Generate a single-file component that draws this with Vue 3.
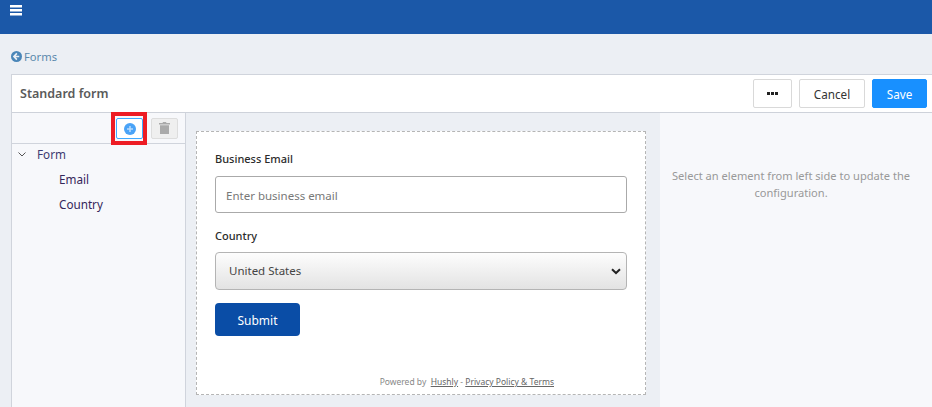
<script setup>
const items = ['Email', 'Country']
</script>

<template>
  <div class="page">
    <header class="topbar">
      <svg class="burger" width="12" height="11" viewBox="0 0 12 11"><path d="M0 0h12v2.4H0zM0 4h12v2.4H0zM0 8h12v2.4H0z" fill="#fff"/></svg>
    </header>
    <nav class="crumb">
      <svg width="11" height="11" viewBox="0 0 12 12"><circle cx="6" cy="6" r="6" fill="#4a86b8"/><path d="M6.4 2.6 3.2 6l3.2 3.4M3.6 6h5.4" stroke="#eceff4" stroke-width="1.8" fill="none"/></svg>
      <span>Forms</span>
    </nav>
    <main class="card">
      <div class="head">
        <h1>Standard form</h1>
        <div class="actions">
          <button class="btn more">
            <svg width="11" height="3" viewBox="0 0 11 3"><path d="M0 0h3v3H0zM4 0h3v3H4zM8 0h3v3H8z" fill="#222"/></svg>
          </button>
          <button class="btn cancel">Cancel</button>
          <button class="btn save">Save</button>
        </div>
      </div>
      <div class="body">
        <aside class="tree">
          <div class="tools">
            <span class="hilite">
              <button class="tool add">
                <svg width="12" height="12" viewBox="0 0 12 12"><circle cx="6" cy="6" r="6" fill="#4aa3f7"/><path d="M6 3v6M3 6h6" stroke="#bcdcfb" stroke-width="1.5"/></svg>
              </button>
            </span>
            <button class="tool del">
              <svg width="11" height="12" viewBox="0 0 11 12"><path d="M4 0h3l.5 1H11v1.5H0V1h3.5zM1 3.3h9V12H1z" fill="#aaa"/></svg>
            </button>
          </div>
          <div class="nodes">
            <div class="root">
              <svg width="8" height="5" viewBox="0 0 8 5"><path d="M.5.5 4 4 7.5.5" stroke="#555" fill="none"/></svg>
              <span>Form</span>
            </div>
            <div v-for="i in items" :key="i" class="leaf">{{ i }}</div>
          </div>
        </aside>
        <section class="canvas">
          <div class="form">
            <label class="lab">Business Email</label>
            <div class="input">Enter business email</div>
            <label class="lab second">Country</label>
            <div class="select">
              <span>United States</span>
              <svg width="10" height="7" viewBox="0 0 10 7"><path d="M1 1.2 5 5l4-3.8" stroke="#222" stroke-width="2" fill="none"/></svg>
            </div>
            <button class="submit">Submit</button>
            <p class="foot">Powered by &nbsp;<u>Hushly</u> - <u>Privacy Policy &amp; Terms</u></p>
          </div>
        </section>
        <aside class="config">
          <p>Select an element from left side to update the configuration.</p>
        </aside>
      </div>
    </main>
  </div>
</template>

<style>
html, body { margin: 0; background: #eceff4; overflow: hidden; }
</style>

<style scoped>
.page { width: 932px; height: 407px; overflow: hidden; background: #eceff4; font-family: "Noto Sans", "Open Sans", sans-serif; }
.topbar { height: 34px; background: #1b58a8; box-sizing: border-box; padding: 5px 0 0 10px; }
.burger { display: block; }
.crumb { height: 40px; box-sizing: border-box; padding: 15px 0 0 11px; display: flex; align-items: flex-start; gap: 2px; font-size: 11.2px; line-height: 16px; color: #5b89ad; }
.crumb svg { margin-top: 2px; }
.card { margin-left: 11px; border: 1px solid #d0d4dc; border-right: 0; border-bottom: 0; height: 333px; box-sizing: border-box; }
.head { height: 38px; box-sizing: border-box; background: #fff; display: flex; align-items: center; justify-content: space-between; padding: 0 5px 0 8px; border-bottom: 1px solid #ced2da; }
h1 { margin: 0; font-size: 12.5px; font-weight: 600; color: #5a5a5a; }
.actions { display: flex; gap: 7px; }
.btn { height: 29px; border-radius: 2px; font: 11.7px "Noto Sans", sans-serif; padding: 0; border: 1px solid #d9d9d9; background: #fff; color: #333; display: flex; align-items: center; justify-content: center; }
.more { width: 39px; }
.cancel { width: 66px; }
.save { width: 55px; background: #1890ff; border-color: #1890ff; color: #fff; }
.body { display: flex; height: 294px; }
.tree { width: 174px; background: #f7f8fb; border-right: 1px solid #d0d4dc; flex: none; box-sizing: border-box; }
.tools { height: 31px; box-sizing: border-box; border-bottom: 1px solid #d0d4dc; display: flex; justify-content: flex-end; align-items: center; gap: 4px; padding-right: 7px; }
.hilite { border: 4px solid #ed1c24; padding: 1px 0 1px 1px; height: 33px; box-sizing: border-box; display: flex; align-items: center; align-self: flex-start; margin-top: -1px; background: #f7f8fb; }
.tool { width: 27px; height: 21px; padding: 0; display: flex; align-items: center; justify-content: center; border-radius: 2px; background: #fff; }
.add { border: 1px solid #40a9ff; }
.del { border: 1px solid #ddd; background: #efefef; }
.nodes { font-size: 11.7px; color: #35265a; }
.root { height: 20px; display: flex; align-items: center; padding-left: 6px; gap: 11px; }
.root span { color: #3d3a70; }
.leaf { height: 25px; line-height: 25px; padding-left: 47px; }
.root + .leaf { margin-top: 3px; }
.canvas { width: 474px; flex: none; background: #eceff4; padding: 18px 14px 0 10px; box-sizing: border-box; }
.form { height: 264px; width: 450px; box-sizing: border-box; border: 1px dashed #b5b5b5; background: #fff; padding: 18px 18px 0 18px; position: relative; color: #333; }
.lab { display: block; font-size: 11px; font-weight: 500; line-height: 18px; color: #2b2b2b; }
.input { margin-top: 8px; height: 37px; line-height: 37px; box-sizing: border-box; border: 1px solid #aaa; border-radius: 3px; padding-left: 10px; color: #777; font-size: 11.5px; }
.second { margin-top: 14px; }
.select { margin-top: 7px; height: 38px; box-sizing: border-box; border: 1px solid #b4b4b4; border-radius: 4px; background: linear-gradient(#fdfdfd, #e3e3e3); display: flex; justify-content: space-between; align-items: center; padding: 0 5px 2px 13px; font-size: 11.5px; color: #444; }
.select svg { margin-top: 2px; }
.submit { display: block; margin-top: 13px; width: 85px; height: 33px; border: 0; border-radius: 4px; background: #0a4da6; color: #fff; font: 12px "Noto Sans", sans-serif; padding: 2px 0 0; }
.foot { position: absolute; right: 91px; bottom: 6px; margin: 0; font-size: 8.5px; color: #888; white-space: nowrap; line-height: 12px; }
.foot u { color: #666; }
.config { flex: 1; background: #f7f8fb; text-align: center; padding: 54px 18px 0 8px; font-size: 11.1px; line-height: 17px; color: #999; box-sizing: border-box; }
.config p { margin: 0; }
</style>
